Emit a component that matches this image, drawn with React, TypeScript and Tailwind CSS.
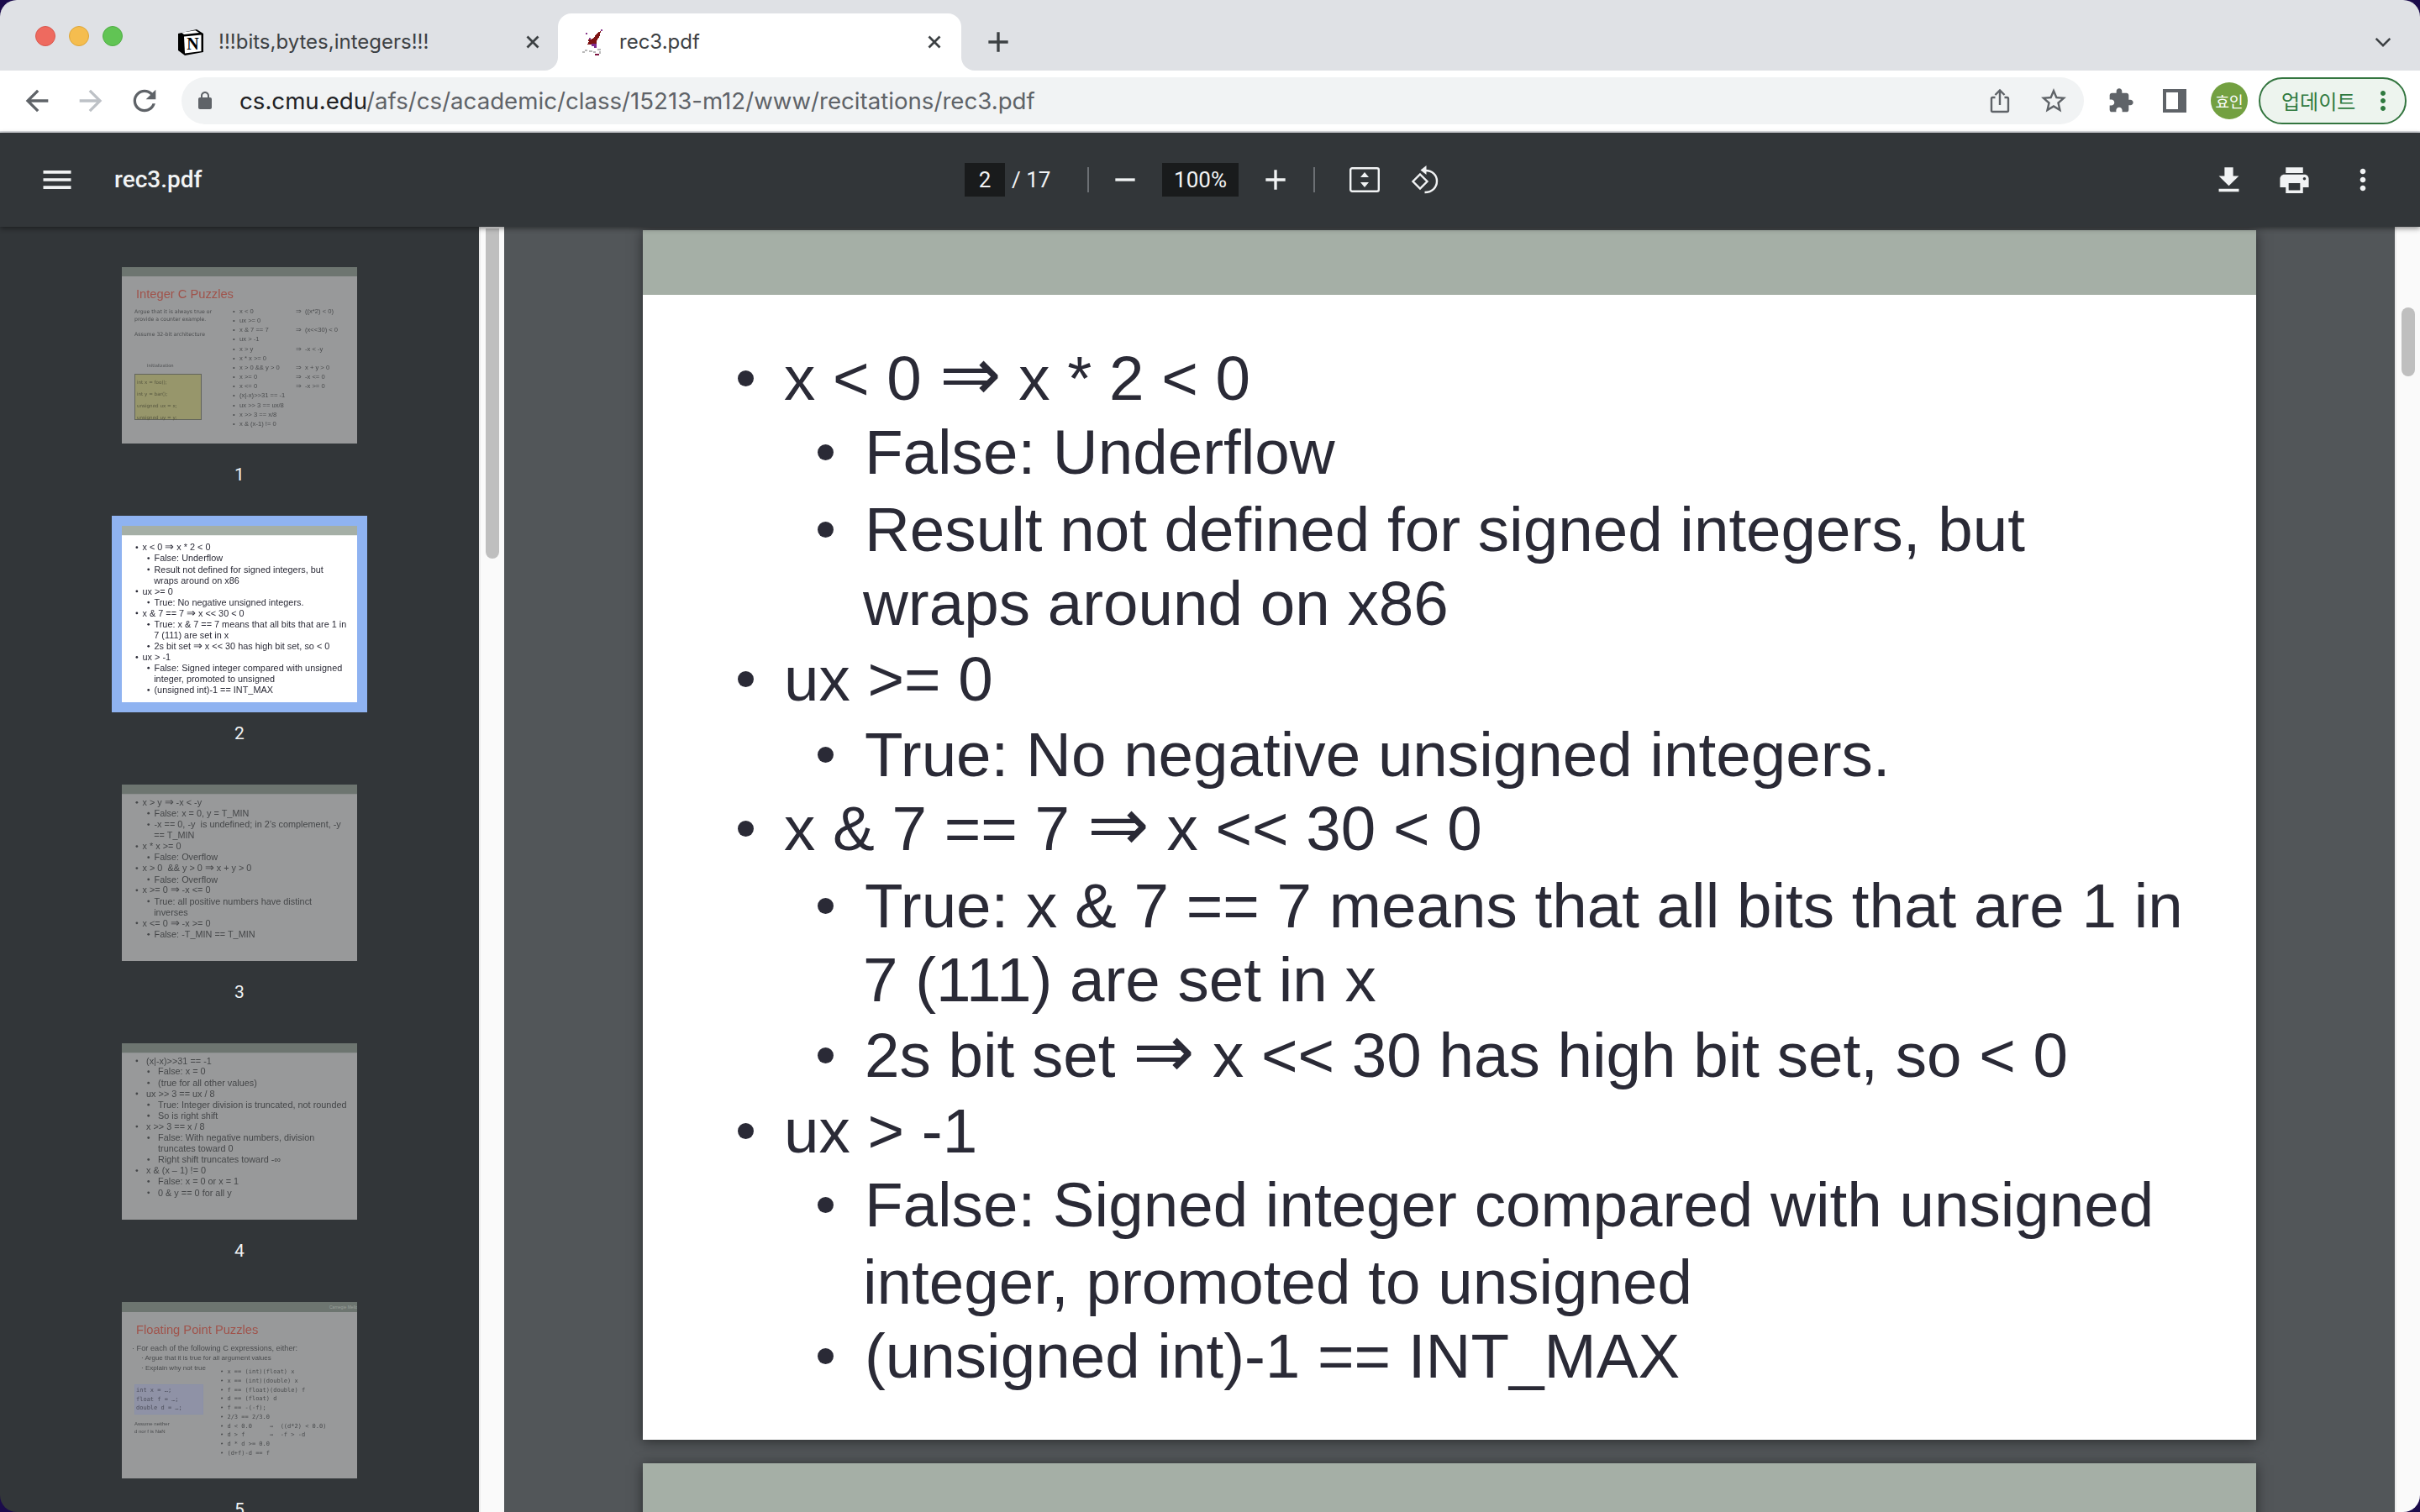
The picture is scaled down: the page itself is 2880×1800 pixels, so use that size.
import React from "react";

type R = { l: 1 | 2 | 0; t: string; m?: string };

const page2: R[] = [
  { l: 1, t: "x < 0 ⇒ x * 2 < 0" },
  { l: 2, t: "False: Underflow" },
  { l: 2, t: "Result not defined for signed integers, but", m: "mt-[4px]" },
  { l: 0, t: "wraps around on x86" },
  { l: 1, t: "ux >= 0", m: "mt-[2px]" },
  { l: 2, t: "True: No negative unsigned integers.", m: "mt-[2px]" },
  { l: 1, t: "x & 7 == 7 ⇒ x << 30 < 0" },
  { l: 2, t: "True: x & 7 == 7 means that all bits that are 1 in", m: "mt-[4px]" },
  { l: 0, t: "7 (111) are set in x" },
  { l: 2, t: "2s bit set ⇒ x << 30 has high bit set, so < 0", m: "mt-[2px]" },
  { l: 1, t: "ux > -1", m: "mt-[2px]" },
  { l: 2, t: "False: Signed integer compared with unsigned" },
  { l: 0, t: "integer, promoted to unsigned", m: "mt-[4px]" },
  { l: 2, t: "(unsigned int)-1 == INT_MAX" },
];

const page3: R[] = [
  { l: 1, t: "x > y ⇒ -x < -y" },
  { l: 2, t: "False: x = 0, y = T_MIN" },
  { l: 2, t: "-x == 0, -y  is undefined; in 2’s complement, -y", m: "mt-[4px]" },
  { l: 0, t: "== T_MIN" },
  { l: 1, t: "x * x >= 0", m: "mt-[2px]" },
  { l: 2, t: "False: Overflow", m: "mt-[2px]" },
  { l: 1, t: "x > 0  && y > 0 ⇒ x + y > 0" },
  { l: 2, t: "False: Overflow", m: "mt-[4px]" },
  { l: 1, t: "x >= 0 ⇒ -x <= 0" },
  { l: 2, t: "True: all positive numbers have distinct", m: "mt-[2px]" },
  { l: 0, t: "inverses", m: "mt-[2px]" },
  { l: 1, t: "x <= 0 ⇒ -x >= 0" },
  { l: 2, t: "False: -T_MIN == T_MIN", m: "mt-[4px]" },
];

const page4: R[] = [
  { l: 1, t: "(x|-x)>>31 == -1" },
  { l: 2, t: "False: x = 0" },
  { l: 2, t: "(true for all other values)", m: "mt-[4px]" },
  { l: 1, t: "ux >> 3 == ux / 8" },
  { l: 2, t: "True: Integer division is truncated, not rounded", m: "mt-[2px]" },
  { l: 2, t: "So is right shift", m: "mt-[2px]" },
  { l: 1, t: "x >> 3 == x / 8" },
  { l: 2, t: "False: With negative numbers, division", m: "mt-[4px]" },
  { l: 0, t: "truncates toward 0" },
  { l: 2, t: "Right shift truncates toward -∞", m: "mt-[2px]" },
  { l: 1, t: "x & (x – 1) != 0", m: "mt-[2px]" },
  { l: 2, t: "False: x = 0 or x = 1" },
  { l: 2, t: "0 & y == 0 for all y", m: "mt-[4px]" },
];

function RowText({ t }: { t: string }) {
  const parts = t.split("⇒");
  if (parts.length === 1) return <span>{t}</span>;
  return (
    <span>
      {parts[0]}
      <span className="text-[88px] leading-[0]">⇒</span>
      {parts[1]}
    </span>
  );
}

function SlideRows({ rows, wide, dim }: { rows: R[]; wide?: boolean; dim?: boolean }) {
  const color = dim ? "text-[#454749]" : "text-[#2a2a36]";
  const dot = dim ? "bg-[#454749]" : "bg-[#2a2a36]";
  return (
    <div className={`font-['Liberation_Sans',Arial,sans-serif] text-[74.6px] leading-[88px] whitespace-pre ${color}`}>
      {rows.map((r, i) => {
        const pad =
          r.l === 1 ? "pl-[113px]" : r.l === 2 ? "pl-[208px]" : wide ? "pl-[295px]" : "pl-[262px]";
        const gap = wide ? (r.l === 1 ? "mr-[67px]" : "mr-[68px]") : r.l === 1 ? "mr-[36px]" : "mr-[37px]";
        return (
          <div key={i} className={`flex items-center h-[88px] ${pad} ${r.m ?? ""}`}>
            {r.l !== 0 && <span className={`w-[19px] h-[19px] rounded-full shrink-0 ${dot} ${gap}`} />}
            <RowText t={r.t} />
          </div>
        );
      })}
    </div>
  );
}

function Scaled({ rows, wide, dim, pad }: { rows: R[]; wide?: boolean; dim?: boolean; pad: string }) {
  return (
    <div className={`w-[280px] h-[210px] overflow-hidden ${dim ? "bg-[#98999a]" : "bg-white"}`}>
      <div className={`w-[1920px] h-[1440px] origin-top-left scale-[0.14583] ${dim ? "blur-[1.4px]" : "blur-[1.6px]"}`}>
        <div className={`h-[77px] ${dim ? "bg-[#6d7570]" : "bg-[#a5afa6]"}`} />
        <div className={pad}>
          <SlideRows rows={rows} wide={wide} dim={dim} />
        </div>
      </div>
    </div>
  );
}

function Thumb1() {
  const rows = [
    ["x < 0", "⇒", "((x*2) < 0)"],
    ["ux >= 0", "", ""],
    ["x & 7 == 7", "⇒", "(x<<30) < 0"],
    ["ux > -1", "", ""],
    ["x > y", "⇒", "-x < -y"],
    ["x * x >= 0", "", ""],
    ["x > 0 && y > 0", "⇒", "x + y > 0"],
    ["x >= 0", "⇒", "-x <= 0"],
    ["x <= 0", "⇒", "-x >= 0"],
    ["(x|-x)>>31 == -1", "", ""],
    ["ux >> 3 == ux/8", "", ""],
    ["x >> 3 == x/8", "", ""],
    ["x & (x-1) != 0", "", ""],
  ];
  return (
    <div className="w-[280px] h-[210px] overflow-hidden bg-[#98999a] font-['Liberation_Sans',sans-serif] text-[#4a4c4e]">
      <div className="blur-[0.3px]">
        <div className="h-[11px] bg-[#6d7570]" />
        <div className="pl-[17px] pt-[12px] h-[36px] text-[14.7px] leading-[18px] text-[#a0534b]">Integer C Puzzles</div>
        <div className="flex">
          <div className="w-[132px] shrink-0 pl-[15px] font-['DejaVu_Sans',sans-serif] text-[6.2px] leading-[9px] whitespace-nowrap">
            <div className="pt-[1px]">Argue that it is always true or</div>
            <div>provide a counter example.</div>
            <div className="mt-[9px]">Assume 32-bit architecture</div>
            <div className="mt-[29px] pl-[15px] text-[5.2px]">Initialization</div>
            <div className="mt-[5px] w-[80px] h-[55px] bg-[#97966b] border border-[#62645c] pl-[2px] pt-[2px] text-[5.6px] leading-[14px] text-[#55553f]">
              <div>int x = foo();</div>
              <div>int y = bar();</div>
              <div>unsigned ux = x;</div>
              <div>unsigned uy = y;</div>
            </div>
          </div>
          <div className="text-[7.6px] leading-[11.15px] whitespace-nowrap">
            {rows.map((r, i) => (
              <div key={i} className="flex">
                <span className="w-[8px]">•</span>
                <span className="w-[67px]">{r[0]}</span>
                <span className="w-[11px]">{r[1]}</span>
                <span>{r[2]}</span>
              </div>
            ))}
          </div>
        </div>
      </div>
    </div>
  );
}

function Thumb5() {
  const rows = [
    "x == (int)(float) x",
    "x == (int)(double) x",
    "f == (float)(double) f",
    "d == (float) d",
    "f == -(-f);",
    "2/3 == 2/3.0",
    "d < 0.0     ⇒  ((d*2) < 0.0)",
    "d > f       ⇒  -f > -d",
    "d * d >= 0.0",
    "(d+f)-d == f",
  ];
  return (
    <div className="w-[280px] h-[210px] overflow-hidden bg-[#98999a] font-['Liberation_Sans',sans-serif] text-[#4a4c4e]">
      <div className="blur-[0.4px]">
        <div className="h-[12px] bg-[#6d7570] pl-[247px] overflow-hidden whitespace-nowrap text-[5px] leading-[12px] text-[#9aa09c]">Carnegie Mellon</div>
        <div className="pl-[17px] pt-[12px] h-[38px] text-[14.7px] leading-[18px] text-[#a0534b]">Floating Point Puzzles</div>
        <div className="pl-[12px] text-[9.2px] leading-[11px] whitespace-nowrap">
          <div>· For each of the following C expressions, either:</div>
          <div className="pl-[11px] text-[8px] leading-[12px]">· Argue that it is true for all argument values</div>
        </div>
        <div className="flex">
          <div className="w-[117px] shrink-0 pl-[15px] whitespace-nowrap">
            <div className="pl-[8px] text-[8px] leading-[12px]">· Explain why not true</div>
            <div className="mt-[13px] w-[82px] h-[36px] bg-[#8f92a6] border border-[#8a90a8] pl-[1px] font-['DejaVu_Sans_Mono',monospace] text-[7px] leading-[10.5px] pt-[1px] text-[#4d4f5c]">
              <div>int x = …;</div>
              <div>float f = …;</div>
              <div>double d = …;</div>
            </div>
            <div className="mt-[7px] text-[6px] leading-[9px]">Assume neither</div>
            <div className="text-[6px] leading-[9px]">d nor f is NaN</div>
          </div>
          <div className="pt-[5px] font-['DejaVu_Sans_Mono',monospace] text-[7px] leading-[10.75px] whitespace-pre">
            {rows.map((r) => (
              <div key={r}>• {r}</div>
            ))}
          </div>
        </div>
      </div>
    </div>
  );
}

function ThumbItem({ n, selected, children }: { n: number; selected?: boolean; children: React.ReactNode }) {
  return (
    <div className="h-[308px] shrink-0 flex flex-col items-center">
      <div className={selected ? "outline-[12px] outline-solid outline-[#8fb3f1]" : ""}>{children}</div>
      <div className="mt-[23px] h-[28px] leading-[28px] text-[21px] text-[#f1f3f4] font-['Roboto',sans-serif]">{n}</div>
    </div>
  );
}

function Mat({ d, size, fill, cls }: { d: string; size: string; fill: string; cls?: string }) {
  return (
    <svg viewBox="0 0 24 24" className={`${size} ${fill} ${cls ?? ""} shrink-0`}>
      <path d={d} />
    </svg>
  );
}

function CloseX({ cls }: { cls: string }) {
  return (
    <svg viewBox="0 0 16 16" className={`w-[16px] h-[16px] ${cls}`}>
      <path d="M1.5 1.5 L14.5 14.5 M14.5 1.5 L1.5 14.5" stroke="#3c4043" strokeWidth="2.8" />
    </svg>
  );
}

function Notion() {
  return (
    <svg viewBox="0 0 32 32" className="w-[32px] h-[32px] shrink-0">
      <path d="M1 6 L23 1 L31 6 V28 L9 32 L1 26 Z" fill="#000" />
      <path d="M8 9.5 L28.5 7.5 V27 L9 29.5 Z" fill="#fff" />
      <path d="M5 4.8 L21.5 2.2 L26 5 L8 7 Z" fill="#fff" />
      <text x="18.4" y="25" textAnchor="middle" fontFamily="Liberation Serif, serif" fontWeight="700" fontSize="20" fill="#000">N</text>
    </svg>
  );
}

function Griffin() {
  return (
    <svg viewBox="0 0 24 32" className="w-[24px] h-[32px] shrink-0" shapeRendering="crispEdges">
      <path d="M22 3 L21 8 L17 15 L16 21 L12 19 L6 19 L8 15 L5 14 L13 12 L18 5 Z" fill="#7d1313" />
      <path d="M11 18 h6 v5 h-3 v-2 h-3 Z" fill="#7e2a8e" />
      <path d="M4 5 h2 v2 h-2 Z M8 11 h2 v2 h-2 Z M22 1 h2 v2 h-2 Z" fill="#8a3a8e" />
      <path d="M0 27 h3 v2 h-3 Z M3 25 h3 v2 h-3 Z M8 26 h4 v2 h-4 Z M13 27 h3 v2 h-3 Z M18 24 h4 v2 h-4 Z M20 27 h2 v3 h-2 Z" fill="#b9b9b9" />
      <path d="M15 30 h5 v2 h-5 Z" fill="#7d1340" />
    </svg>
  );
}

function TabBar() {
  return (
    <div className="h-[84px] shrink-0 bg-[#dfe1e5] flex items-end">
      <div className="w-[42px] shrink-0" />
      <div className="h-[84px] w-[144px] shrink-0 flex gap-[16px] pt-[31px]">
        <span className="w-[24px] h-[24px] rounded-full bg-[#ee6a5f] border border-[#d9574d]" />
        <span className="w-[24px] h-[24px] rounded-full bg-[#f5bd4f] border border-[#dda63a]" />
        <span className="w-[24px] h-[24px] rounded-full bg-[#61c454] border border-[#4fae44]" />
      </div>
      <div className="w-[478px] h-[68px] shrink-0 flex items-center pl-[25px] text-[#3c4043] font-['Inter',sans-serif] text-[24px]">
        <Notion />
        <span className="ml-[17px] whitespace-nowrap">!!!bits,bytes,integers!!!</span>
        <CloseX cls="ml-auto mr-[22px] shrink-0" />
      </div>
      <div className="relative w-[480px] h-[68px] shrink-0 bg-white rounded-t-[16px] flex items-center pl-[29px] text-[#3c4043] font-['Inter',sans-serif] text-[24px]">
        <span className="absolute left-[-16px] bottom-0 w-[16px] h-[16px] bg-white">
          <span className="block w-full h-full bg-[#dfe1e5] rounded-br-[16px]" />
        </span>
        <span className="absolute right-[-16px] bottom-0 w-[16px] h-[16px] bg-white">
          <span className="block w-full h-full bg-[#dfe1e5] rounded-bl-[16px]" />
        </span>
        <Griffin />
        <span className="ml-[20px]">rec3.pdf</span>
        <CloseX cls="ml-auto mr-[24px] shrink-0" />
      </div>
      <div className="h-[68px] flex items-center ml-[24px]">
        <Mat d="M19 13h-6v6h-2v-6H5v-2h6V5h2v6h6v2z" size="w-[40px] h-[40px]" fill="fill-[#3c4043]" />
      </div>
      <div className="ml-auto h-[68px] flex items-center mr-[34px]">
        <svg viewBox="0 0 24 14" className="w-[20px] h-[12px]">
          <path d="M2 2 L12 12 L22 2" fill="none" stroke="#3c4043" strokeWidth="3" />
        </svg>
      </div>
    </div>
  );
}

function ToolBar() {
  return (
    <div className="h-[74px] shrink-0 bg-white border-b-2 border-[#dadce0] flex items-center">
      <div className="w-[216px] shrink-0 flex items-center pl-[24px] gap-[24px]">
        <Mat d="M20 11H7.83l5.59-5.59L12 4l-8 8 8 8 1.41-1.41L7.83 13H20v-2z" size="w-[40px] h-[40px]" fill="fill-[#5f6368]" />
        <Mat d="M4 11h12.17l-5.59-5.59L12 4l8 8-8 8-1.41-1.41L16.17 13H4v-2z" size="w-[40px] h-[40px]" fill="fill-[#bdc1c6]" />
        <Mat
          d="M17.65 6.35C16.2 4.9 14.21 4 12 4c-4.42 0-7.99 3.58-7.99 8s3.57 8 7.99 8c3.73 0 6.84-2.55 7.73-6h-2.08c-.82 2.33-3.04 4-5.65 4-3.31 0-6-2.69-6-6s2.69-6 6-6c1.66 0 3.14.69 4.22 1.78L13 11h7V4l-2.35 2.35z"
          size="w-[40px] h-[40px]"
          fill="fill-[#5f6368]"
        />
      </div>
      <div className="w-[2264px] h-[56px] shrink-0 rounded-full bg-[#f1f3f4] flex items-center pl-[16px] pr-[18px]">
        <Mat
          d="M18 8h-1V6c0-2.76-2.24-5-5-5S7 3.24 7 6v2H6c-1.1 0-2 .9-2 2v10c0 1.1.9 2 2 2h12c1.1 0 2-.9 2-2V10c0-1.1-.9-2-2-2zM9 6c0-1.66 1.34-3 3-3s3 1.34 3 3v2H9V6z"
          size="w-[24px] h-[24px]"
          fill="fill-[#5f6368]"
        />
        <span className="ml-[29px] pt-[2px] font-['Inter',sans-serif] text-[27.65px] text-[#5f6368] whitespace-nowrap">
          <span className="text-[#202124]">cs.cmu.edu</span>/afs/cs/academic/class/15213-m12/www/recitations/rec3.pdf
        </span>
        <svg viewBox="0 0 24 30" className="ml-auto w-[24px] h-[30px] shrink-0">
          <path d="M6.5 11 H3.5 Q2 11 2 12.5 V26.5 Q2 28 3.5 28 H20.5 Q22 28 22 26.5 V12.5 Q22 11 20.5 11 H17.5" fill="none" stroke="#5f6368" strokeWidth="2.4" />
          <path d="M12 20 V3 M6.5 8 L12 2.5 L17.5 8" fill="none" stroke="#5f6368" strokeWidth="2.4" />
        </svg>
        <Mat
          d="M22 9.24l-7.19-.62L12 2 9.19 8.63 2 9.24l5.46 4.73L5.82 21 12 17.27 18.18 21l-1.63-7.03L22 9.24zM12 15.4l-3.76 2.27 1-4.28-3.32-2.88 4.38-.38L12 6.1l1.71 4.04 4.38.38-3.32 2.88 1 4.28L12 15.4z"
          size="w-[36px] h-[36px]"
          fill="fill-[#5f6368]"
          cls="ml-[34px]"
        />
      </div>
      <Mat
        d="M20.5 11H19V7c0-1.1-.9-2-2-2h-4V3.5C13 2.12 11.88 1 10.5 1S8 2.12 8 3.5V5H4c-1.1 0-1.99.9-1.99 2v3.8H3.5c1.49 0 2.7 1.21 2.7 2.7s-1.21 2.7-2.7 2.7H2V20c0 1.1.9 2 2 2h3.8v-1.5c0-1.49 1.21-2.7 2.7-2.7 1.49 0 2.7 1.21 2.7 2.7V22H17c1.1 0 2-.9 2-2v-4h1.5c1.38 0 2.5-1.12 2.5-2.5S21.88 11 20.5 11z"
        size="w-[32px] h-[32px]"
        fill="fill-[#5f6368]"
        cls="ml-[28px]"
      />
      <div className="ml-[34px] w-[28px] h-[28px] bg-[#5f6368] pl-[4px] py-[4px] shrink-0">
        <div className="w-[14px] h-[20px] bg-white" />
      </div>
      <div className="ml-[29px] w-[44px] h-[44px] rounded-full bg-[#73a041] text-white flex items-center justify-center text-[18px] font-['Noto_Sans_CJK_KR',sans-serif] shrink-0">
        효인
      </div>
      <div className="ml-[13px] w-[176px] h-[56px] rounded-full bg-[#edf4ee] border-2 border-[#33753f] flex items-center pl-[25px] text-[#2f7a3f] text-[24px] font-['Noto_Sans_CJK_KR',sans-serif] shrink-0">
        <span>업데이트</span>
        <Mat
          d="M12 8c1.1 0 2-.9 2-2s-.9-2-2-2-2 .9-2 2 .9 2 2 2zm0 2c-1.1 0-2 .9-2 2s.9 2 2 2 2-.9 2-2-.9-2-2-2zm0 6c-1.1 0-2 .9-2 2s.9 2 2 2 2-.9 2-2-.9-2-2-2z"
          size="w-[36px] h-[36px]"
          fill="fill-[#2f7a3f]"
          cls="ml-[15px]"
        />
      </div>
    </div>
  );
}

function PdfBar() {
  const dots =
    "M12 8c1.1 0 2-.9 2-2s-.9-2-2-2-2 .9-2 2 .9 2 2 2zm0 2c-1.1 0-2 .9-2 2s.9 2 2 2 2-.9 2-2-.9-2-2-2zm0 6c-1.1 0-2 .9-2 2s.9 2 2 2 2-.9 2-2-.9-2-2-2z";
  return (
    <div className="relative z-10 h-[112px] shrink-0 bg-[#323639] shadow-[0_2px_6px_rgba(0,0,0,0.45)] flex items-center text-[#f1f3f4] font-['Roboto',sans-serif]">
      <div className="w-[1148px] shrink-0 flex items-center pl-[46px]">
        <Mat d="M3 18h18v-2H3v2zm0-5h18v-2H3v2zm0-7v2h18V6H3z" size="w-[44px] h-[44px]" fill="fill-[#f1f3f4]" />
        <span className="ml-[46px] text-[28px] font-medium">rec3.pdf</span>
      </div>
      <div className="w-[48px] h-[40px] bg-[#191b1c] flex items-center justify-center text-[26px] shrink-0">2</div>
      <span className="ml-[8px] w-[90px] text-[26px] whitespace-pre shrink-0">/ 17</span>
      <div className="w-[2px] h-[30px] bg-[#6c7074] shrink-0" />
      <Mat d="M19 13H5v-2h14v2z" size="w-[40px] h-[40px]" fill="fill-[#f1f3f4]" cls="ml-[23px]" />
      <div className="ml-[24px] w-[91px] h-[40px] bg-[#191b1c] flex items-center justify-center text-[26px] shrink-0">100%</div>
      <Mat d="M19 13h-6v6h-2v-6H5v-2h6V5h2v6h6v2z" size="w-[40px] h-[40px]" fill="fill-[#f1f3f4]" cls="ml-[24px]" />
      <div className="ml-[25px] w-[2px] h-[30px] bg-[#6c7074] shrink-0" />
      <svg viewBox="0 0 36 30" className="ml-[41px] w-[36px] h-[30px] shrink-0">
        <rect x="1.2" y="1.2" width="33.6" height="27.6" rx="2" fill="none" stroke="#f1f3f4" strokeWidth="2.4" />
        <path d="M18 6 L23 12 H13 Z M18 24 L23 18 H13 Z" fill="#f1f3f4" />
      </svg>
      <svg viewBox="0 0 32 36" className="ml-[36px] w-[35px] h-[36px] shrink-0">
        <path d="M17 7 C25 7 30.5 12.5 30.5 19.5 C30.5 27 25 33 16 33" fill="none" stroke="#f1f3f4" strokeWidth="2.4" />
        <path d="M18 1 V12 L11 6.5 Z" fill="#f1f3f4" />
        <path d="M10.5 11.5 L19 20 L10.5 28.5 L2 20 Z" fill="none" stroke="#f1f3f4" strokeWidth="2.4" />
      </svg>
      <div className="ml-auto flex items-center pr-[48px]">
        <Mat d="M19 9h-4V3H9v6H5l7 7 7-7zM5 18v2h14v-2H5z" size="w-[41px] h-[41px]" fill="fill-[#f1f3f4]" />
        <Mat
          d="M19 8H5c-1.66 0-3 1.34-3 3v6h4v4h12v-4h4v-6c0-1.66-1.34-3-3-3zm-3 11H8v-5h8v5zm3-7c-.55 0-1-.45-1-1s.45-1 1-1 1 .45 1 1-.45 1-1 1zm-1-9H6v4h12V3z"
          size="w-[41px] h-[41px]"
          fill="fill-[#f1f3f4]"
          cls="ml-[37px]"
        />
        <Mat d={dots} size="w-[40px] h-[40px]" fill="fill-[#f1f3f4]" cls="ml-[41px]" />
      </div>
    </div>
  );
}

function Scrollbar({ thumb, top }: { thumb: string; top: string }) {
  return (
    <div className={`w-[30px] shrink-0 bg-[#fafafa] border-l-2 border-[#ececec] pl-[6px] ${top}`}>
      <div className={`w-[16px] rounded-full bg-[#bfbfbf] ${thumb}`} />
    </div>
  );
}

export default function App() {
  return (
    <div className="w-[2880px] h-[1800px] bg-[#1b0b4b] overflow-hidden">
      <div className="w-full h-full rounded-[20px] overflow-hidden flex flex-col">
        <TabBar />
        <ToolBar />
        <PdfBar />
        <div className="flex-1 min-h-0 flex">
          <div className="w-[570px] shrink-0 bg-[#323639] pt-[48px] flex flex-col overflow-hidden">
            <ThumbItem n={1}><Thumb1 /></ThumbItem>
            <ThumbItem n={2} selected><Scaled rows={page2} pad="pt-[55px]" /></ThumbItem>
            <ThumbItem n={3}><Scaled rows={page3} pad="pt-[25px]" dim /></ThumbItem>
            <ThumbItem n={4}><Scaled rows={page4} pad="pt-[22px]" wide dim /></ThumbItem>
            <ThumbItem n={5}><Thumb5 /></ThumbItem>
          </div>
          <Scrollbar top="pt-[2px]" thumb="h-[393px] rounded-t-none" />
          <div className="flex-1 min-w-0 bg-[#525659] pt-[4px] flex flex-col items-center gap-[28px] overflow-hidden">
            <div className="w-[1920px] h-[1440px] shrink-0 bg-white shadow-[0_2px_14px_rgba(0,0,0,0.5)]">
              <div className="h-[77px] bg-[#a5afa6]" />
              <div className="pt-[55px]">
                <SlideRows rows={page2} />
              </div>
            </div>
            <div className="w-[1920px] h-[200px] shrink-0 bg-[#a5afa6] shadow-[0_2px_14px_rgba(0,0,0,0.5)]" />
          </div>
          <Scrollbar top="pt-[96px]" thumb="h-[82px]" />
        </div>
      </div>
    </div>
  );
}
